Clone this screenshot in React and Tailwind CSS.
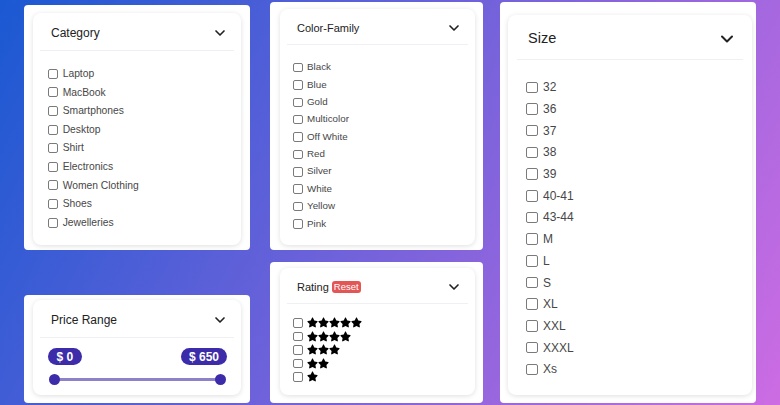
import { ChevronDown } from 'lucide-react';
import { FaStar } from 'react-icons/fa';

function Box({ className }) {
  return <span className={`block shrink-0 rounded-[2px] border border-[#7a7a7a] bg-white ${className}`} />;
}

const cardShadow = 'shadow-[0_1px_5px_rgba(0,0,0,0.13)]';

const categories = ['Laptop', 'MacBook', 'Smartphones', 'Desktop', 'Shirt', 'Electronics', 'Women Clothing', 'Shoes', 'Jewelleries'];
const colors = ['Black', 'Blue', 'Gold', 'Multicolor', 'Off White', 'Red', 'Silver', 'White', 'Yellow', 'Pink'];
const sizes = ['32', '36', '37', '38', '39', '40-41', '43-44', 'M', 'L', 'S', 'XL', 'XXL', 'XXXL', 'Xs'];

export default function App() {
  return (
    <div className="flex h-[405px] w-[780px] items-start overflow-hidden bg-[linear-gradient(118deg,#1a59d2,#cd6ce3)] font-['Liberation_Sans',Arial,sans-serif]">
      {/* Column 1 */}
      <div className="ml-[24px] flex w-[226px] flex-col">
        <div className="mt-[5px] h-[245px] rounded-[4px] bg-white px-[9px] pt-[8px] pb-[5px]">
          <div className={`h-full rounded-[8px] bg-white px-[7px] ${cardShadow}`}>
            <div className="flex h-[38px] items-center justify-between border-b border-[#eef0f3] pl-[11px] pr-[6px] pt-[3px]">
              <span className="text-[12px] text-[#222]">Category</span>
              <ChevronDown size={16} strokeWidth={2.5} className="text-[#222]" />
            </div>
            <div className="flex flex-col pl-[8px] pt-[13.5px]">
              {categories.map((t) => (
                <div key={t} className="flex h-[18.6px] items-center gap-[4.7px]">
                  <Box className="h-[10px] w-[10px]" />
                  <span className="text-[10.3px] text-[#474747]">{t}</span>
                </div>
              ))}
            </div>
          </div>
        </div>

        <div className="mt-[45px] h-[108px] rounded-[4px] bg-white px-[9px] pt-[5px] pb-[8px]">
          <div className={`h-full rounded-[8px] bg-white px-[7px] ${cardShadow}`}>
            <div className="flex h-[38px] items-center justify-between border-b border-[#eef0f3] pl-[11px] pr-[6px] pt-[3px]">
              <span className="text-[12px] text-[#222]">Price Range</span>
              <ChevronDown size={16} strokeWidth={2.5} className="text-[#222]" />
            </div>
            <div className="flex items-center justify-between pl-[8px] pr-[7px] pt-[10px]">
              <span className="flex h-[17px] items-center rounded-full bg-[#3c2caa] px-[8.5px] text-[12px] font-bold text-white">$ 0</span>
              <span className="flex h-[17px] items-center rounded-full bg-[#3c2caa] px-[8px] text-[12px] font-bold text-white">$ 650</span>
            </div>
            <div className="relative mx-[8.5px] mt-[8.5px] h-[11px]">
              <div className="absolute left-[5.5px] right-[5.5px] top-[4px] h-[3px] bg-[#8d82c9]" />
              <div className="absolute left-0 top-0 h-[11px] w-[11px] rounded-full bg-[#3c2caa]" />
              <div className="absolute right-0 top-0 h-[11px] w-[11px] rounded-full bg-[#3c2caa]" />
            </div>
          </div>
        </div>
      </div>

      {/* Column 2 */}
      <div className="ml-[20px] flex w-[213px] flex-col">
        <div className="mt-[2px] h-[248px] rounded-[4px] bg-white pl-[10px] pr-[8px] pt-[7px] pb-[5px]">
          <div className={`h-full rounded-[8px] bg-white px-[7px] ${cardShadow}`}>
            <div className="flex h-[36px] items-center justify-between border-b border-[#eef0f3] pl-[10px] pr-[6px] pt-[3px]">
              <span className="text-[11px] text-[#222]">Color-Family</span>
              <ChevronDown size={16} strokeWidth={2.5} className="text-[#222]" />
            </div>
            <div className="flex flex-col pl-[6px] pt-[13.8px]">
              {colors.map((t) => (
                <div key={t} className="flex h-[17.4px] items-center gap-[4.5px]">
                  <Box className="h-[9.5px] w-[9.5px]" />
                  <span className="text-[9.8px] text-[#474747]">{t}</span>
                </div>
              ))}
            </div>
          </div>
        </div>

        <div className="mt-[12px] h-[141px] rounded-[4px] bg-white pl-[10px] pr-[8px] pt-[6px] pb-[8px]">
          <div className={`h-full rounded-[8px] bg-white px-[7px] ${cardShadow}`}>
            <div className="flex h-[36px] items-center justify-between border-b border-[#eef0f3] pl-[10px] pr-[6px] pt-[3px]">
              <div className="flex items-center gap-[3px]">
                <span className="text-[11px] text-[#222]">Rating</span>
                <span className="flex h-[12px] items-center rounded-[3px] bg-[#e35656] px-[2px] text-[9.5px] text-white">Reset</span>
              </div>
              <ChevronDown size={16} strokeWidth={2.5} className="text-[#222]" />
            </div>
            <div className="flex flex-col pl-[6px] pt-[12.2px]">
              {[5, 4, 3, 2, 1].map((n) => (
                <div key={n} className="flex h-[13.5px] items-center gap-[4.5px]">
                  <Box className="h-[9.5px] w-[9.5px]" />
                  <div className="flex">
                    {Array.from({ length: n }).map((_, i) => (
                      <FaStar key={i} size={11} className="text-black" />
                    ))}
                  </div>
                </div>
              ))}
            </div>
          </div>
        </div>
      </div>

      {/* Column 3 */}
      <div className="ml-[17px] flex w-[256px] flex-col">
        <div className="mt-[2px] h-[401px] rounded-[4px] bg-white pl-[8px] pr-[4px] pt-[13px] pb-[8px]">
          <div className={`h-full rounded-[8px] bg-white px-[9px] ${cardShadow}`}>
            <div className="flex h-[45px] items-center justify-between border-b border-[#eef0f3] pl-[11px] pr-[6px] pt-[4px]">
              <span className="text-[14.5px] text-[#222]">Size</span>
              <ChevronDown size={20} strokeWidth={2.4} className="text-[#222]" />
            </div>
            <div className="flex flex-col pl-[9px] pt-[16.5px]">
              {sizes.map((t) => (
                <div key={t} className="flex h-[21.7px] items-center gap-[5.5px]">
                  <Box className="h-[11.5px] w-[11.5px]" />
                  <span className="text-[12px] text-[#474747]">{t}</span>
                </div>
              ))}
            </div>
          </div>
        </div>
      </div>
    </div>
  );
}
